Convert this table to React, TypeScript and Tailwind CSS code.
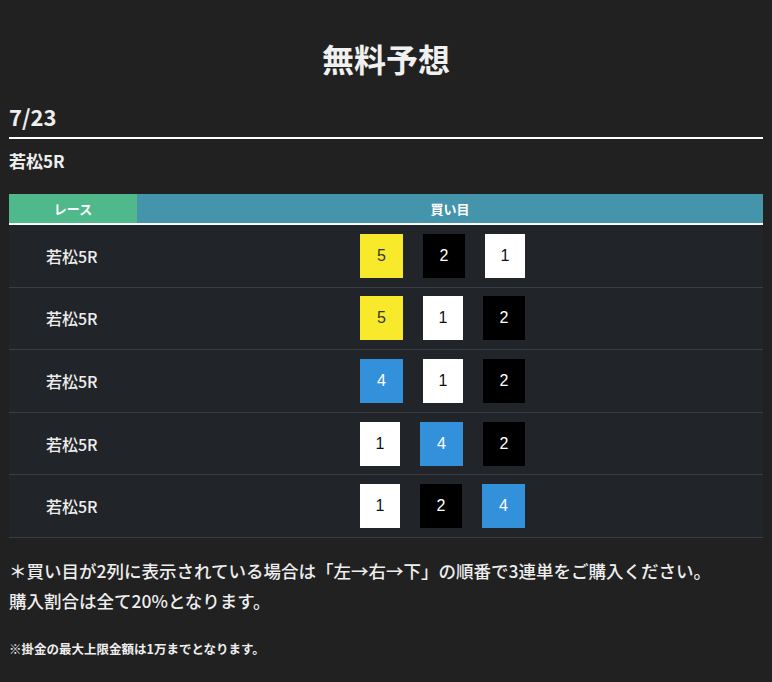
const rows: number[][] = [
  [5, 2, 1],
  [5, 1, 2],
  [4, 1, 2],
  [1, 4, 2],
  [1, 2, 4],
]

const boxStyle: Record<number, string> = {
  1: 'w-[40px] bg-white text-[#111]',
  2: 'w-[42px] bg-black text-white',
  4: 'w-[43px] bg-[#3391dc] text-white',
  5: 'w-[43px] bg-[#f8e92b] text-[#333]',
}

export default function App() {
  return (
    <div className="min-h-[682px] w-full bg-[#212121] px-[9px] pt-[38px] pb-6 text-[#eeeeee] [font-family:'Noto_Sans_CJK_JP','Noto_Sans',sans-serif]">
      <h1 className="text-center text-[32px] font-bold leading-[40px] text-[#f0f0f0]">
        無料予想
      </h1>

      <div className="mt-[23px] border-b-2 border-white pb-[6px]">
        <p className="text-[22px] font-bold leading-[30px]">7/23</p>
      </div>
      <p className="mt-[9px] text-[17px] font-bold leading-[26px]">若松5R</p>

      <div className="mt-[20px]">
        {/* ヘッダー */}
        <div className="flex h-[31px] border-b-2 border-white text-[13px] font-bold text-white">
          <div className="flex w-[128px] items-center justify-center bg-[#4fb98c]">レース</div>
          <div className="flex flex-1 items-center justify-center bg-[#4494ab]">買い目</div>
        </div>

        {rows.map((row, i) => (
          <div
            key={i}
            className="flex h-[62.6px] items-center border-b border-[#3a3d42] bg-[#212429]"
          >
            <div className="w-[128px] pl-[37px] text-[16px] font-medium">若松5R</div>
            <div className="flex gap-[20px] pl-[223px]">
              {row.map((n, j) => (
                <div
                  key={j}
                  className={`flex h-[44px] items-center justify-center text-[16px] [font-family:'Liberation_Sans',Arial,sans-serif] ${boxStyle[n]}`}
                >
                  {n}
                </div>
              ))}
            </div>
          </div>
        ))}
      </div>

      <div className="mt-[18px] text-[17.5px] font-medium leading-[30px]">
        <p>＊買い目が2列に表示されている場合は「左→右→下」の順番で3連単をご購入ください。</p>
        <p>購入割合は全て20%となります。</p>
      </div>
      <p className="mt-[24px] text-[12.5px] font-bold">※掛金の最大上限金額は1万までとなります。</p>
    </div>
  )
}
